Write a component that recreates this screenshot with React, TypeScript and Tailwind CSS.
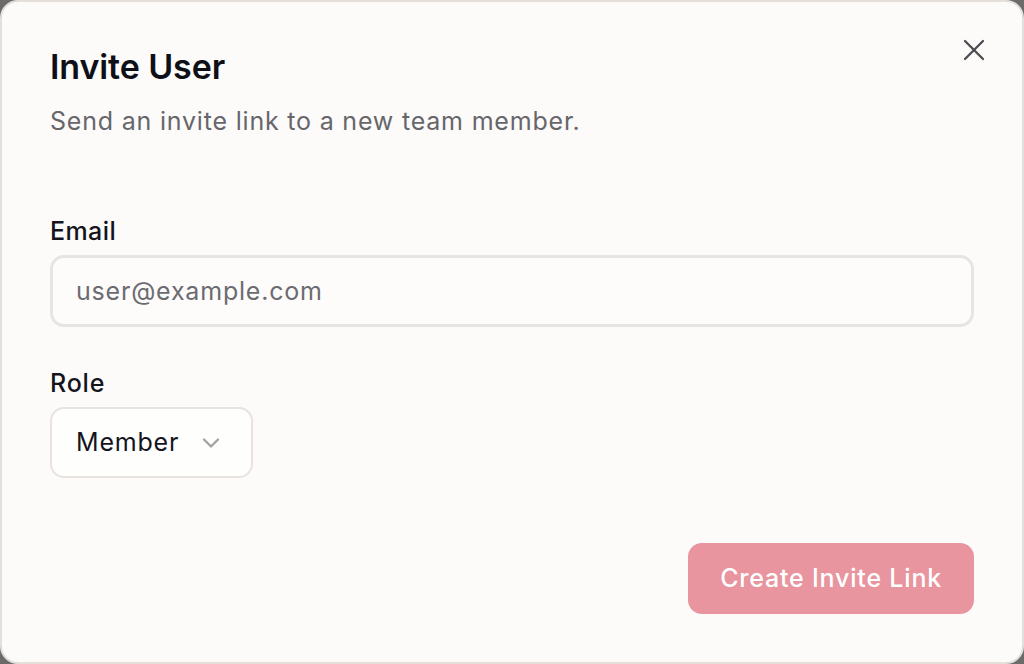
import React, { useState } from 'react';
import { X, ChevronDown } from 'lucide-react';

const InviteUserDialog: React.FC = () => {
  const [email, setEmail] = useState('');
  const [role] = useState('Member');

  return (
    <div className="relative h-[664px] w-[1024px] overflow-hidden rounded-[18px] border-2 border-[#e4dfda] bg-[#fcfbfa] px-[48px] pt-[45px] pb-[49px] font-['Inter',sans-serif]">
      <button
        type="button"
        className="absolute left-[954px] top-[30px] text-[#4b4b52]"
        aria-label="Close"
      >
        <X size={36} strokeWidth={1.5} />
      </button>

      <h1 className="text-[34px] leading-[40px] font-semibold tracking-[-0.1px] text-[#0f0f17]">
        Invite User
      </h1>
      <p className="mt-[18px] text-[25px] leading-[32px] tracking-[0.8px] text-[#66666b]">
        Send an invite link to a new team member.
      </p>

      <div className="mt-[78px] flex flex-col gap-[8px]">
        <label htmlFor="email" className="text-[25px] leading-[32px] font-medium tracking-[0.4px] text-[#14141c]">
          Email
        </label>
        <input
          id="email"
          type="email"
          value={email}
          onChange={(e) => setEmail(e.target.value)}
          placeholder="user@example.com"
          className="h-[72px] w-full rounded-[14px] border-[3px] border-[#e7e5e4] bg-[#fdfcfb] px-[23px] text-[25px] tracking-[0.8px] text-[#14141c] placeholder:text-[#6b6b70] outline-none"
        />
      </div>

      <div className="mt-[40px] flex flex-col items-start gap-[8px]">
        <label className="text-[25px] leading-[32px] font-medium tracking-[0.8px] text-[#14141c]">Role</label>
        <button
          type="button"
          className="flex h-[71px] w-[203px] items-center justify-between rounded-[14px] border-2 border-[#e8e3de] bg-[#fefefd] pl-[24px] pr-[26px] text-[25px] tracking-[0.8px] text-[#14141c]"
        >
          <span>{role}</span>
          <ChevronDown size={28} strokeWidth={2} className="text-[#a3a3a6]" />
        </button>
      </div>

      <div className="mt-[65px] flex justify-end">
        <button
          type="button"
          disabled
          className="h-[71px] rounded-[14px] bg-[#e8959f] px-[32px] text-[25px] font-medium tracking-[0.8px] text-white"
        >
          Create Invite Link
        </button>
      </div>
    </div>
  );
};

export default function App() {
  return (
    <div className="h-[664px] w-[1024px] bg-[#6b6b6b]">
      <InviteUserDialog />
    </div>
  );
}
